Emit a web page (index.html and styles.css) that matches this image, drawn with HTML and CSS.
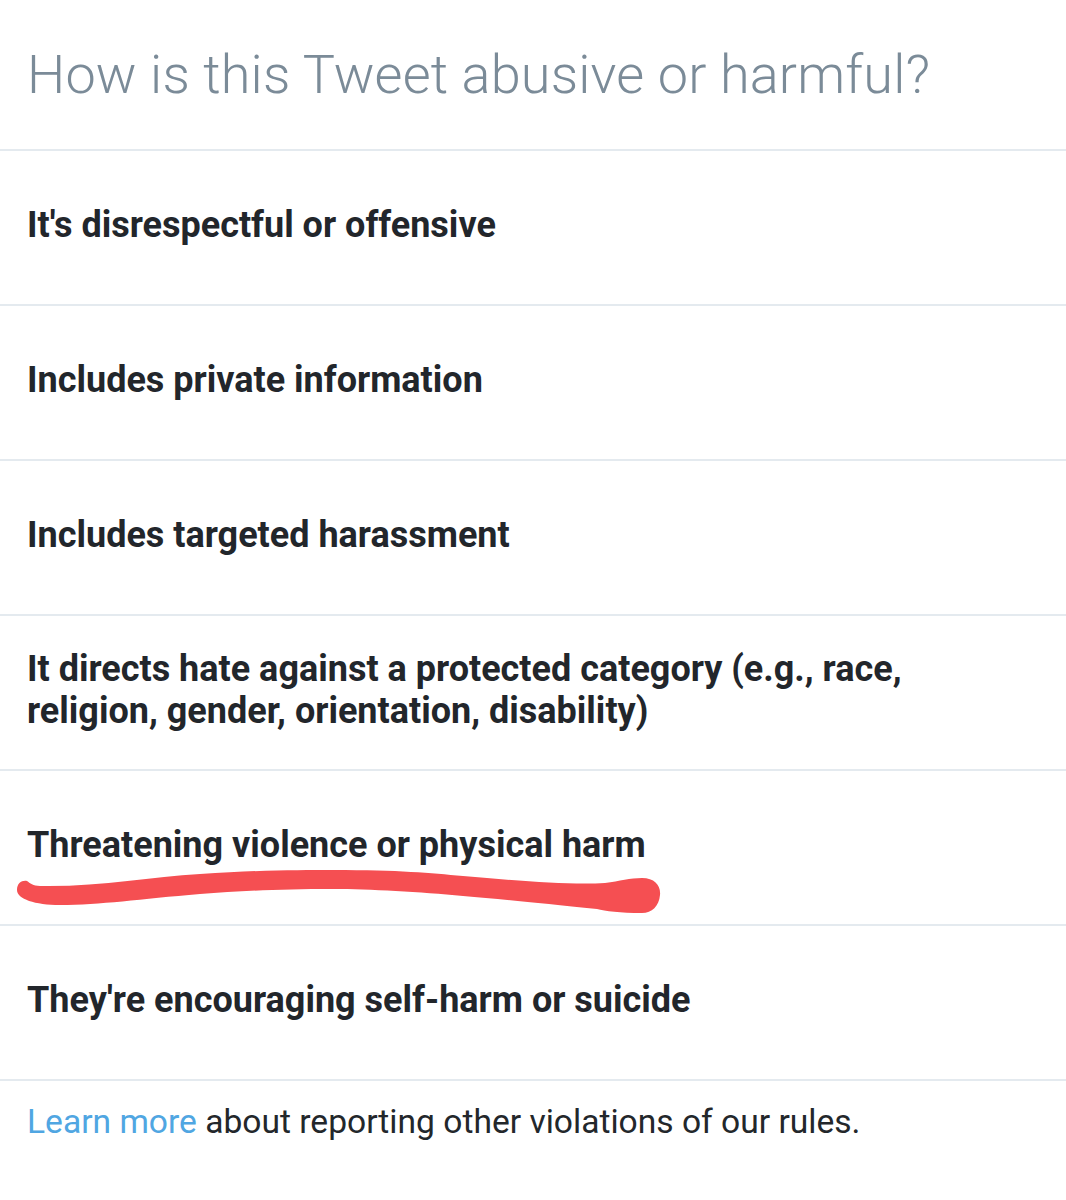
FILE: index.html
```html
<!DOCTYPE html>
<html>
<head>
<meta charset="utf-8">
<link rel="stylesheet" href="styles.css">
</head>
<body>
<div class="report">
  <div class="header"><h1 class="title">How is this Tweet abusive or harmful?</h1></div>
  <div class="option"><span>It's disrespectful or offensive</span></div>
  <div class="option"><span>Includes private information</span></div>
  <div class="option"><span>Includes targeted harassment</span></div>
  <div class="option"><span>It directs hate against a protected category (e.g., race, religion, gender, orientation, disability)</span></div>
  <div class="option marked"><span>Threatening violence or physical harm</span>
    <svg class="scribble" width="680" height="60" viewBox="0 0 680 60">
      <path d="M27 20 C 30 22, 33 25, 40 25 C 100 26, 150 16, 200 13 C 260 9, 300 9, 333 9 C 400 9, 430 12, 463 15 C 520 20, 570 24, 605 22 C 620 20, 630 17, 642 17 C 655 17, 661 25, 660 34 C 659 45, 652 52, 642 52 C 620 52, 605 50, 597 48 C 540 42, 500 38, 463 35 C 420 31, 370 28, 333 28 C 280 28, 240 30, 200 33 C 140 38, 100 44, 60 44 C 35 44, 17 38, 17 29 C 17 22, 22 19, 27 20 Z" fill="#f54f52"/>
    </svg>
  </div>
  <div class="option"><span>They're encouraging self-harm or suicide</span></div>
  <div class="footer"><a class="link">Learn more</a> about reporting other violations of our rules.</div>
</div>
</body>
</html>
```
FILE: styles.css
```css
html, body {
  margin: 0;
  padding: 0;
  background: #ffffff;
}
body {
  font-family: Roboto, "Noto Sans", sans-serif;
}
.report {
  width: 1066px;
}
.header {
  height: 151px;
  box-sizing: border-box;
  padding: 40px 0 0 27px;
  border-bottom: 2px solid #e4eaef;
}
.title {
  margin: 0;
  font-weight: 300;
  font-size: 54px;
  line-height: 70px;
  letter-spacing: 0.17px;
  color: #7b8b98;
}
.option {
  position: relative;
  height: 155px;
  box-sizing: border-box;
  display: flex;
  align-items: center;
  padding: 0 120px 5px 27px;
  border-bottom: 2px solid #e4eaef;
  font-weight: 700;
  font-size: 36px;
  line-height: 42px;
  color: #22262b;
}
.scribble {
  position: absolute;
  left: 0;
  top: 90px;
}
.footer {
  padding: 20px 27px;
  font-size: 33.6px;
  line-height: 42px;
  color: #23272b;
}
.link {
  color: #50a6e2;
}
```
